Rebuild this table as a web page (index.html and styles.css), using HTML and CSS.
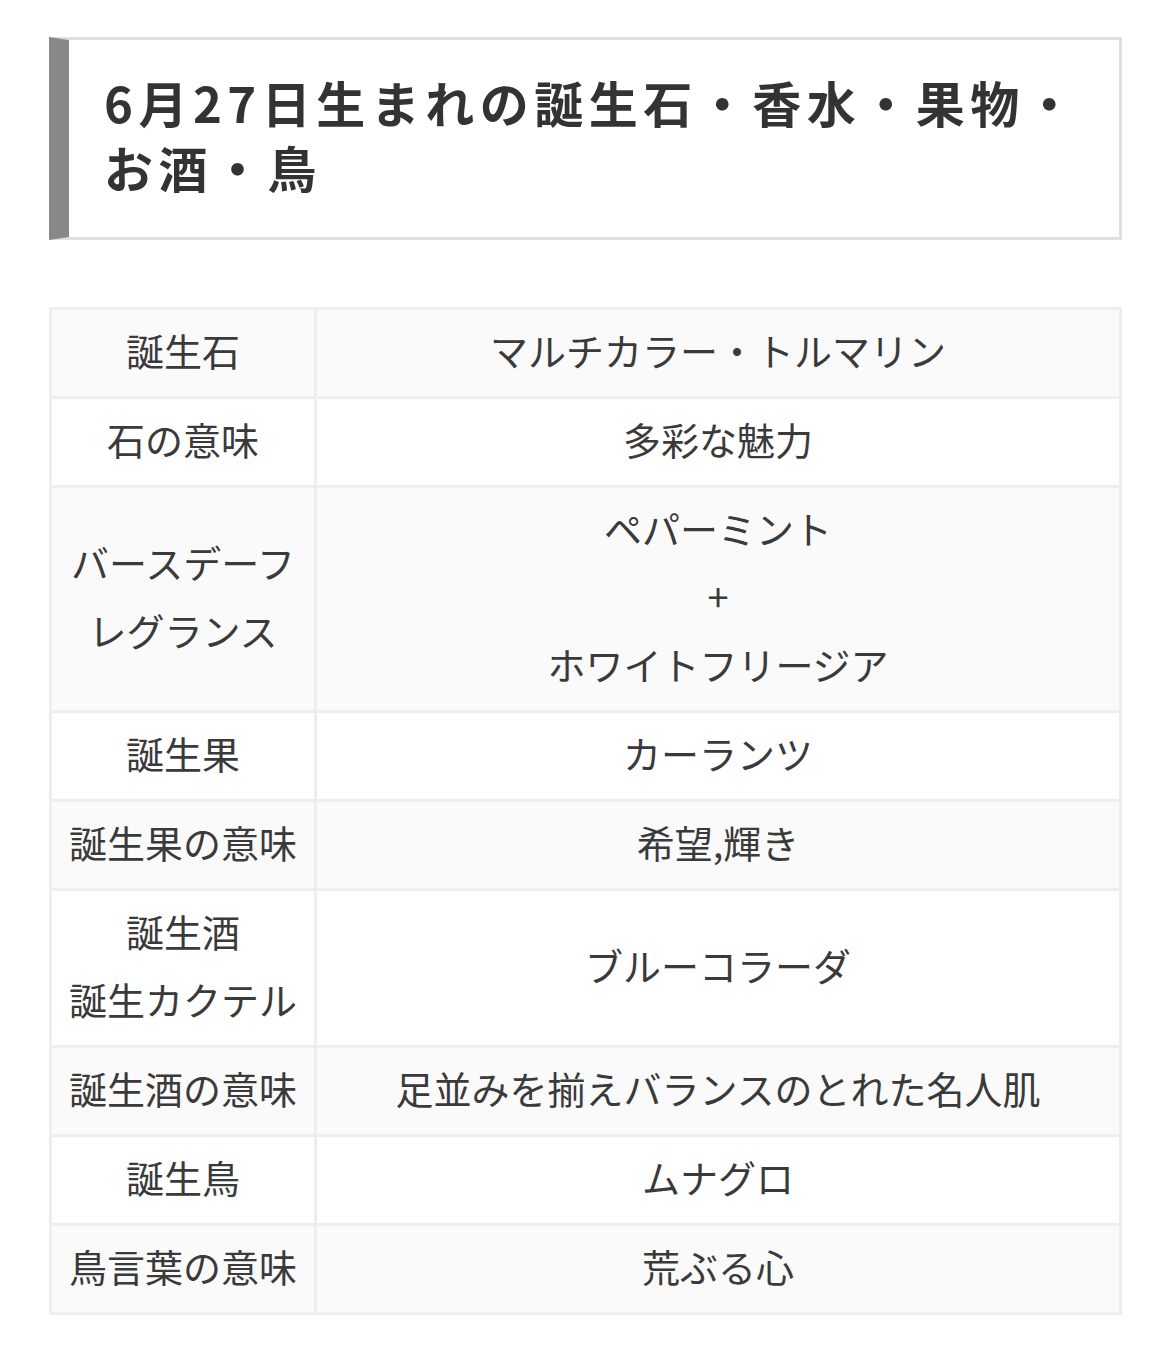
FILE: index.html
```html
<!DOCTYPE html>
<html lang="ja">
<head>
<meta charset="utf-8">
<link rel="stylesheet" href="styles.css">
</head>
<body>
<div class="page">
  <h2 class="title">6月27日生まれの誕生石・香水・果物・お酒・鳥</h2>
  <table class="info">
    <tbody>
      <tr><th>誕生石</th><td>マルチカラー・トルマリン</td></tr>
      <tr><th>石の意味</th><td>多彩な魅力</td></tr>
      <tr class="tall"><th>バースデーフ<br>レグランス</th><td>ペパーミント<br>+<br>ホワイトフリージア</td></tr>
      <tr><th>誕生果</th><td>カーランツ</td></tr>
      <tr><th>誕生果の意味</th><td>希望,輝き</td></tr>
      <tr><th>誕生酒<br>誕生カクテル</th><td>ブルーコラーダ</td></tr>
      <tr><th>誕生酒の意味</th><td>足並みを揃えバランスのとれた名人肌</td></tr>
      <tr><th>誕生鳥</th><td>ムナグロ</td></tr>
      <tr><th>鳥言葉の意味</th><td>荒ぶる心</td></tr>
    </tbody>
  </table>
</div>
</body>
</html>
```
FILE: styles.css
```css
html, body {
  margin: 0;
  padding: 0;
  background: #fff;
}
body {
  font-family: "Noto Sans CJK JP", "Noto Sans", sans-serif;
  color: #333;
}
.page {
  padding: 37px 48px 40px 49px;
}
.title {
  margin: 0;
  font-size: 49px;
  font-weight: bold;
  line-height: 65px;
  color: #333;
  border: 3px solid #e0e0e0;
  border-left: 20px solid #888;
  padding: 29px 30px 38px 35px;
  letter-spacing: 5.5px;
}
.info {
  margin-top: 67px;
  width: 100%;
  border-collapse: collapse;
  border: 3px solid #eee;
  font-size: 38px;
  line-height: 68px;
  color: #3a3a3a;
}
.info th, .info td {
  border: 3px solid #eee;
  font-weight: normal;
  text-align: center;
  padding: 6px 6px 12px 6px;
  vertical-align: middle;
}
.info th {
  width: 250px;
}
.info tr:nth-child(odd) {
  background: #fafafa;
}
.info tr:nth-child(even) {
  background: #fff;
}
```
